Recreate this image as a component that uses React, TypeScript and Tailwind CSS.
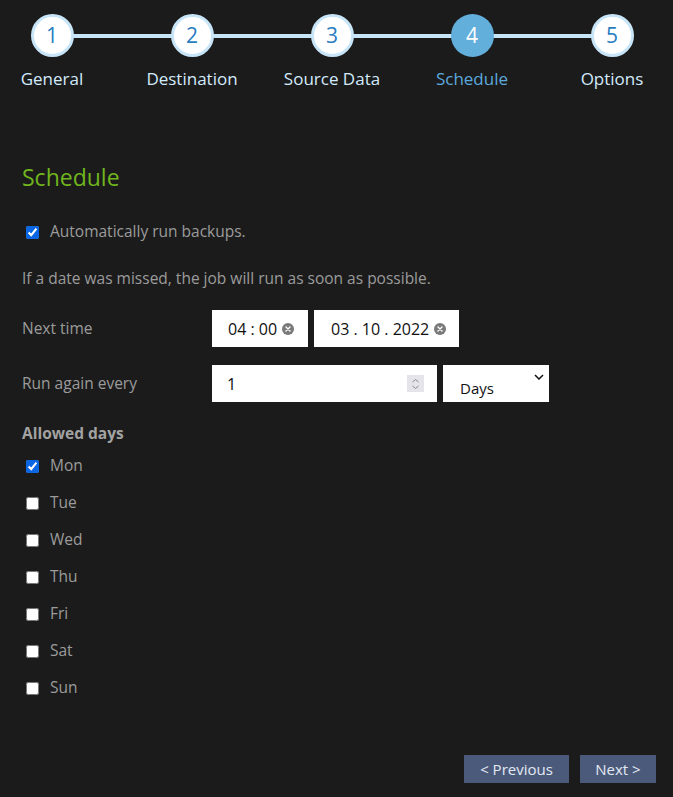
import React from 'react';

const steps = [
  { n: 1, label: 'General' },
  { n: 2, label: 'Destination' },
  { n: 3, label: 'Source Data' },
  { n: 4, label: 'Schedule' },
  { n: 5, label: 'Options' },
];

const days = ['Mon', 'Tue', 'Wed', 'Thu', 'Fri', 'Sat', 'Sun'];

const ClearIcon = () => (
  <svg width="12" height="12" viewBox="0 0 12 12" className="shrink-0">
    <circle cx="6" cy="6" r="6" fill="#7a7a7a" />
    <path d="M4 4 L8 8 M8 4 L4 8" stroke="#fff" strokeWidth="1.4" strokeLinecap="round" />
  </svg>
);

const App: React.FC = () => {
  return (
    <div
      className="w-[673px] h-[797px] bg-[#1b1b1b] text-[#9b9b9b] flex flex-col"
      style={{ fontFamily: '"Open Sans", "DejaVu Sans", sans-serif' }}
    >
      {/* Stepper */}
      <div className="relative pt-[14px] pl-[2px] pr-[11px]">
        <div className="absolute left-[52px] w-[560px] top-[34px] h-[4px] bg-[#c8e5f7]" />
        <div className="relative flex justify-between">
          {steps.map((s) => {
            const active = s.n === 4;
            return (
              <div key={s.n} className="w-[100px] flex flex-col items-center">
                {active ? (
                  <div className="w-[43px] h-[43px] rounded-full bg-[#62afdc] flex items-center justify-center text-white text-[21px]">
                    {s.n}
                  </div>
                ) : (
                  <div className="w-[43px] h-[43px] rounded-full bg-white border-[3px] border-[#c8e5f7] flex items-center justify-center text-[#2a7dbf] text-[21px]">
                    {s.n}
                  </div>
                )}
                <div
                  className={`mt-[11px] text-[17px] leading-[22px] whitespace-nowrap ${
                    active ? 'text-[#5ba9dd]' : 'text-[#d3eafa]'
                  }`}
                >
                  {s.label}
                </div>
              </div>
            );
          })}
        </div>
      </div>

      {/* Content */}
      <div className="px-[22px] flex-1 flex flex-col text-[15.5px]">
        <h2 className="mt-[71px] text-[23px] leading-[32px] text-[#71b51e]">Schedule</h2>

        <label className="mt-[29px] flex items-center h-[20px] pl-[4px] gap-[11px]">
          <input type="checkbox" defaultChecked className="m-0 w-[13px] h-[13px] accent-[#0b66e4]" />
          <span>Automatically run backups.</span>
        </label>

        <p className="mt-[26px] leading-[20px]">
          If a date was missed, the job will run as soon as possible.
        </p>

        <div className="mt-[22px] flex items-center">
          <div className="w-[190px]">Next time</div>
          <div className="flex gap-[6px]">
            <div className="w-[96px] h-[37px] bg-white flex items-center pl-[16px] gap-[5px] text-[16px] text-[#111]">
              <span>04 : 00</span>
              <ClearIcon />
            </div>
            <div className="w-[145px] h-[37px] bg-white flex items-center pl-[17px] gap-[5px] text-[16px] text-[#111]">
              <span>03 . 10 . 2022</span>
              <ClearIcon />
            </div>
          </div>
        </div>

        <div className="mt-[18px] flex items-center">
          <div className="w-[190px]">Run again every</div>
          <div className="flex gap-[6px]">
            <div className="w-[225px] h-[37px] bg-white flex items-center justify-between pl-[15px] pr-[13px] text-[16px] text-[#111]">
              <span>1</span>
              <div className="w-[17px] h-[17px] bg-[#e4e4ea] flex items-center justify-center">
                <svg width="9" height="12" viewBox="0 0 9 12">
                  <path d="M1.5 4 L4.5 1.5 L7.5 4 M1.5 8 L4.5 10.5 L7.5 8" stroke="#888" strokeWidth="1" fill="none" />
                </svg>
              </div>
            </div>
            <div className="w-[106px] h-[37px] bg-white flex items-end justify-between pl-[17px] pr-[5px] pb-[3px] text-[15px] text-[#111]">
              <span>Days</span>
              <svg width="10" height="6" viewBox="0 0 10 6" className="mb-[19px]">
                <path d="M1 1 L5 5 L9 1" stroke="#111" strokeWidth="1.5" fill="none" />
              </svg>
            </div>
          </div>
        </div>

        <div className="mt-[21px] leading-[20px] font-bold text-[#a2a2a2]">Allowed days</div>

        <div className="mt-[13px] flex flex-col gap-[17px] pl-[4px]">
          {days.map((d, i) => (
            <label key={d} className="flex items-center h-[20px] gap-[11px]">
              <input
                type="checkbox"
                defaultChecked={i === 0}
                className="m-0 w-[13px] h-[13px] accent-[#0b66e4]"
              />
              <span>{d}</span>
            </label>
          ))}
        </div>

        <div className="mt-auto mb-[14px] flex justify-end gap-[11px] mr-[-5px]">
          <button className="w-[105px] h-[28px] bg-[#4b5a7b] text-[#e3e9f3] text-[15px]">&lt; Previous</button>
          <button className="w-[76px] h-[28px] bg-[#4b5a7b] text-[#e3e9f3] text-[15px]">Next &gt;</button>
        </div>
      </div>
    </div>
  );
};

export default App;
